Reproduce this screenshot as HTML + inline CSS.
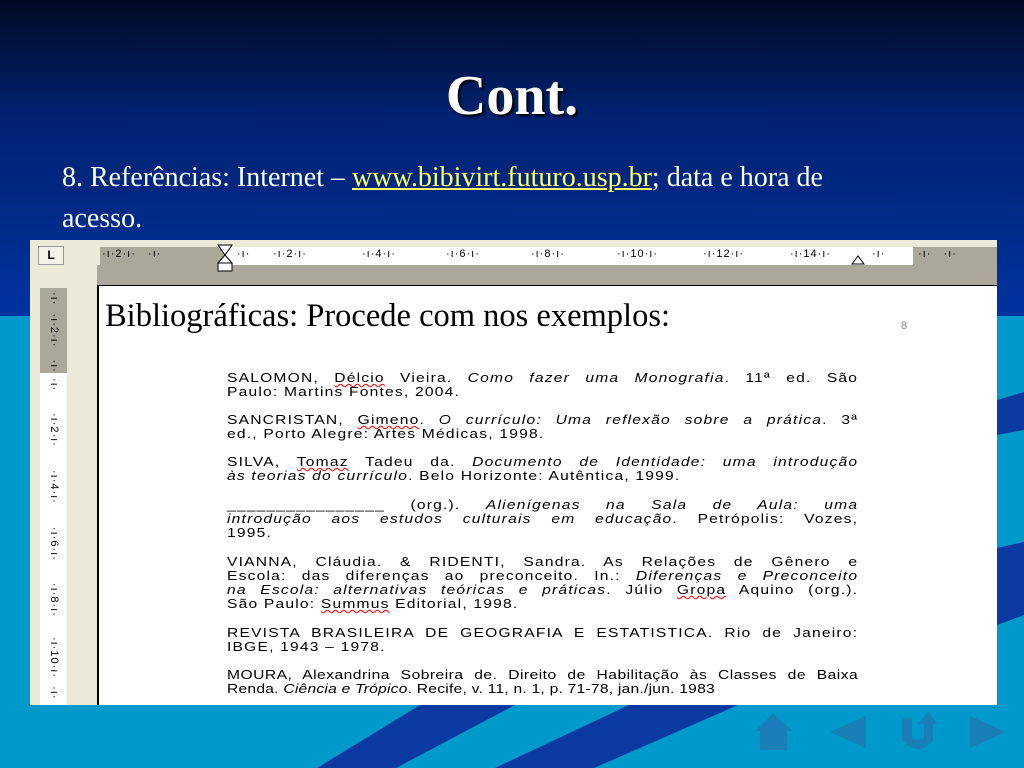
<!DOCTYPE html>
<html><head><meta charset="utf-8"><style>
*{margin:0;padding:0;box-sizing:border-box}
body{width:1024px;height:768px;overflow:hidden;position:relative;background:#0099cc;font-family:"Liberation Serif",serif}
.top{position:absolute;left:0;top:0;width:1024px;height:316px;background:linear-gradient(#000a24 0%,#00216e 35%,#0033a0 100%)}
h1{position:absolute;top:64px;left:0;width:1024px;text-align:center;color:#fff;font-size:56px;font-weight:bold;text-shadow:2px 2px 2px #000}
.p{position:absolute;left:62px;color:#fff;font-size:28px}
.p a{color:#ffff66;text-decoration:underline}
.shot{position:absolute;left:30px;top:240px;width:967px;height:465px;background:#ece9d8;overflow:hidden}
.gray{position:absolute;left:67px;top:25px;width:900px;height:440px;background:#aca899}
.page{position:absolute;left:97px;top:285px;width:900px;height:420px;background:#fff;border-left:2px solid #000;border-top:1px solid #000}
.rn{position:absolute;font-family:"Liberation Sans",sans-serif;font-size:11px;color:#000;white-space:pre;letter-spacing:1px}
.vn{position:absolute;font-family:"Liberation Sans",sans-serif;font-size:11px;color:#000;white-space:pre;transform:rotate(90deg);transform-origin:0 0;letter-spacing:1px}
.ref{position:absolute;left:227px;width:526px;font-family:"Liberation Sans",sans-serif;font-size:13px;letter-spacing:1px;color:#000;white-space:nowrap;line-height:14px;transform:scaleX(1.2);transform-origin:0 0}
.j{text-align:justify;text-align-last:justify;white-space:nowrap}
i{font-style:italic}
.w{text-decoration:underline wavy red;text-decoration-thickness:1px}
</style></head><body>
<div class="top"></div>
<svg style="position:absolute;left:0;top:0" width="1024" height="768">
<path d="M420 705 L515 705 L396 768 L317 768Z" fill="#0a3aa0"/>
<path d="M629 705 L738 705 L594 768 L495 768Z" fill="#0a3aa0"/>
<path d="M997 400 L1024 392 L1024 430 L997 435Z" fill="#0a3aa0"/>
<path d="M997 548 L1024 542 L1024 615 L997 625Z" fill="#0a3aa0"/>
<g fill="#1a7fb8">
<path d="M773 713 L792 731 L787 731 L787 750 L760 750 L760 731 L755 731Z"/>
<path d="M866 716 L866 748 L830 732Z"/>
<path d="M902 718 L912 718 L912 738 Q918 742 924 738 L924 724 L918 724 L928 712 L938 724 L933 724 L933 740 Q918 758 902 740Z"/>
<path d="M970 716 L970 748 L1006 732Z"/>
</g>
</svg>
<h1>Cont.</h1>
<div class="p" style="top:162px">8. Referências: Internet – <a>www.bibivirt.futuro.usp.br</a>; data e hora de</div>
<div class="p" style="top:203px">acesso.</div>
<div class="shot">
<div style="position:absolute;left:8px;top:6px;width:26px;height:19px;border:1px solid #999;background:#f4f2e8;font:bold 12px 'Liberation Sans';text-align:center;line-height:17px">L</div>
<div style="position:absolute;left:70px;top:7px;width:897px;height:18px;background:#aca899"></div>
<div style="position:absolute;left:195px;top:7px;width:688px;height:18px;background:#fff"></div>
<div class="gray"></div>
<div style="position:absolute;left:10px;top:48px;width:27px;height:417px;background:#fff"></div>
<div style="position:absolute;left:10px;top:48px;width:27px;height:85px;background:#aca899"></div>
</div>
<div class="rn" style="left:102px;top:248px">·ı·2·ı·   ·ı·</div>
<div class="rn" style="left:237px;top:248px">·ı·</div>
<div class="rn" style="left:273px;top:248px">·ı·2·ı·</div>
<div class="rn" style="left:362px;top:248px">·ı·4·ı·</div>
<div class="rn" style="left:446px;top:248px">·ı·6·ı·</div>
<div class="rn" style="left:531px;top:248px">·ı·8·ı·</div>
<div class="rn" style="left:617px;top:248px">·ı·10·ı·</div>
<div class="rn" style="left:703px;top:248px">·ı·12·ı·</div>
<div class="rn" style="left:790px;top:248px">·ı·14·ı·</div>
<div class="rn" style="left:872px;top:248px">·ı·</div>
<div class="rn" style="left:918px;top:248px">·ı·   ·ı·</div>
<svg style="position:absolute;left:850px;top:250px" width="16" height="16"><path d="M2 14 L8 6 L14 14Z" fill="#fff" stroke="#000"/></svg>
<svg style="position:absolute;left:216px;top:243px" width="20" height="30"><path d="M2 2 L16 2 L9 12 Z M9 12 L2 20 L16 20Z" fill="#fff" stroke="#000"/><rect x="2" y="20" width="14" height="8" fill="#fff" stroke="#000"/></svg>
<div class="vn" style="top:292px;left:60px">·ı·  ·ı·2·ı·   ·ı·</div>
<div class="vn" style="top:378px;left:60px">·ı·</div>
<div class="vn" style="top:413px;left:60px">·ı·2·ı·</div>
<div class="vn" style="top:470px;left:60px">·ı·4·ı·</div>
<div class="vn" style="top:527px;left:60px">·ı·6·ı·</div>
<div class="vn" style="top:583px;left:60px">·ı·8·ı·</div>
<div class="vn" style="top:637px;left:60px">·ı·10·ı·  ·ı·</div>
<div class="page"></div>
<div style="position:absolute;left:105px;top:298px;font-size:32.5px;color:#000">Bibliográficas: Procede com nos exemplos:</div>
<div style="position:absolute;left:901px;top:320px;font:11px 'Liberation Sans';color:#888">8</div>
<div class="ref j" style="top:371px">SALOMON, <span class="w">Délcio</span> Vieira. <i>Como fazer uma Monografia</i>. 11ª ed. São</div>
<div class="ref" style="top:385px">Paulo: Martins Fontes, 2004.</div>
<div class="ref j" style="top:413px">SANCRISTAN, <span class="w">Gimeno</span>. <i>O currículo: Uma reflexão sobre a prática</i>. 3ª</div>
<div class="ref" style="top:427px">ed., Porto Alegre: Artes Médicas, 1998.</div>
<div class="ref j" style="top:455px">SILVA, <span class="w">Tomaz</span> Tadeu da. <i>Documento de Identidade: uma introdução</i></div>
<div class="ref" style="top:469px"><i>às teorias do currículo</i>. Belo Horizonte: Autêntica, 1999.</div>
<div class="ref j" style="top:498px">________________ (org.). <i>Alienígenas na Sala de Aula: uma</i></div>
<div class="ref j" style="top:512px"><i>introdução aos estudos culturais em educação</i>. Petrópolis: Vozes,</div>
<div class="ref" style="top:526px">1995.</div>
<div class="ref j" style="top:555px">VIANNA, Cláudia. &amp; RIDENTI, Sandra. As Relações de Gênero e</div>
<div class="ref j" style="top:569px">Escola: das diferenças ao preconceito. In.: <i>Diferenças e Preconceito</i></div>
<div class="ref j" style="top:583px"><i>na Escola: alternativas teóricas e práticas</i>. Júlio <span class="w">Gropa</span> Aquino (org.).</div>
<div class="ref" style="top:597px">São Paulo: <span class="w">Summus</span> Editorial, 1998.</div>
<div class="ref j" style="top:626px">REVISTA BRASILEIRA DE GEOGRAFIA E ESTATISTICA. Rio de Janeiro:</div>
<div class="ref" style="top:640px">IBGE, 1943 – 1978.</div>
<div class="ref j" style="top:668px;letter-spacing:0.4px">MOURA, Alexandrina Sobreira de. Direito de Habilitação às Classes de Baixa</div>
<div class="ref" style="top:682px;letter-spacing:0.2px">Renda. <i>Ciência e Trópico</i>. Recife, v. 11, n. 1, p. 71-78, jan./jun. 1983</div>
</body></html>
